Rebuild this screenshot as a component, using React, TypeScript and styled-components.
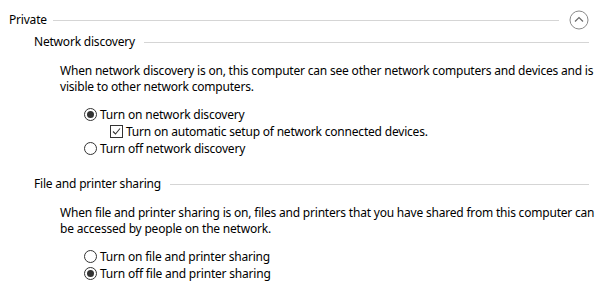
import React from 'react'
import styled, { createGlobalStyle } from 'styled-components'

const GlobalStyle = createGlobalStyle`
  html, body {
    margin: 0;
    padding: 0;
    background: #fff;
  }
  body {
    font-family: 'Noto Sans', 'Segoe UI', sans-serif;
    font-size: 12px;
    letter-spacing: -0.2px;
    color: #000;
  }
`

const Page = styled.div`
  width: 600px;
  height: 291px;
  overflow: hidden;
  padding: 10px 11px 0 9px;
  box-sizing: border-box;
`

const ProfileHeader = styled.div`
  display: flex;
  align-items: center;
  gap: 6px;
  height: 20px;
`

const Heading = styled.span`
  white-space: nowrap;
  line-height: 16px;
`

const Rule = styled.div`
  flex: 1;
  height: 1px;
  background: #d5d5d5;
`

const CollapseButton = styled.button`
  width: 20px;
  height: 20px;
  padding: 0;
  border: none;
  background: transparent;
  display: flex;
  align-items: center;
  justify-content: center;
  margin-left: 4px;
`

const Section = styled.section<{ $top: number }>`
  margin-top: ${p => p.$top}px;
  padding-left: 25px;
`

const SectionHeader = styled.div`
  display: flex;
  align-items: center;
  gap: 9px;
  height: 16px;
`

const Description = styled.p`
  margin: 13px 0 0 26px;
  line-height: 16px;
  width: 545px;
`

const Options = styled.div`
  margin: 11px 0 0 50px;
  display: flex;
  flex-direction: column;
`

const OptionRow = styled.label<{ $indent?: number }>`
  display: flex;
  align-items: center;
  gap: 3px;
  height: 17px;
  line-height: 16px;
  margin-left: ${p => p.$indent || 0}px;
  white-space: nowrap;
`

const RadioMark = styled.span<{ $checked: boolean }>`
  width: 11px;
  height: 11px;
  border: 1px solid #333;
  border-radius: 50%;
  display: flex;
  align-items: center;
  justify-content: center;
  flex: none;

  &::after {
    content: '';
    width: 7px;
    height: 7px;
    border-radius: 50%;
    background: #333;
    display: ${p => (p.$checked ? 'block' : 'none')};
  }
`

const CheckMark = styled.span`
  width: 11px;
  height: 11px;
  border: 1px solid #333;
  flex: none;
  display: flex;
  align-items: center;
  justify-content: center;
`

function Radio({ checked, label }: { checked: boolean; label: string }) {
  return (
    <OptionRow>
      <RadioMark $checked={checked} />
      <span>{label}</span>
    </OptionRow>
  )
}

export default function App() {
  return (
    <Page>
      <GlobalStyle />
      <ProfileHeader>
        <Heading>Private</Heading>
        <Rule />
        <CollapseButton aria-label="Collapse">
          <svg width="20" height="20" viewBox="0 0 20 20">
            <circle cx="10" cy="10" r="9" fill="none" stroke="#8a8a8a" strokeWidth="1" />
            <path d="M6 11.5 L10 7.5 L14 11.5" fill="none" stroke="#6a6a6a" strokeWidth="1.2" />
          </svg>
        </CollapseButton>
      </ProfileHeader>

      <Section $top={4}>
        <SectionHeader>
          <Heading>Network discovery</Heading>
          <Rule />
        </SectionHeader>
        <Description>
          When network discovery is on, this computer can see other network computers and devices and is
          visible to other network computers.
        </Description>
        <Options>
          <Radio checked label="Turn on network discovery" />
          <OptionRow $indent={26}>
            <CheckMark>
              <svg width="9" height="9" viewBox="0 0 9 9">
                <path d="M1 4.5 L3.5 7 L8 1.5" fill="none" stroke="#333" strokeWidth="1.1" />
              </svg>
            </CheckMark>
            <span>Turn on automatic setup of network connected devices.</span>
          </OptionRow>
          <Radio checked={false} label="Turn off network discovery" />
        </Options>
      </Section>

      <Section $top={19}>
        <SectionHeader>
          <Heading>File and printer sharing</Heading>
          <Rule />
        </SectionHeader>
        <Description>
          When file and printer sharing is on, files and printers that you have shared from this computer can
          be accessed by people on the network.
        </Description>
        <Options>
          <Radio checked={false} label="Turn on file and printer sharing" />
          <Radio checked label="Turn off file and printer sharing" />
        </Options>
      </Section>
    </Page>
  )
}
